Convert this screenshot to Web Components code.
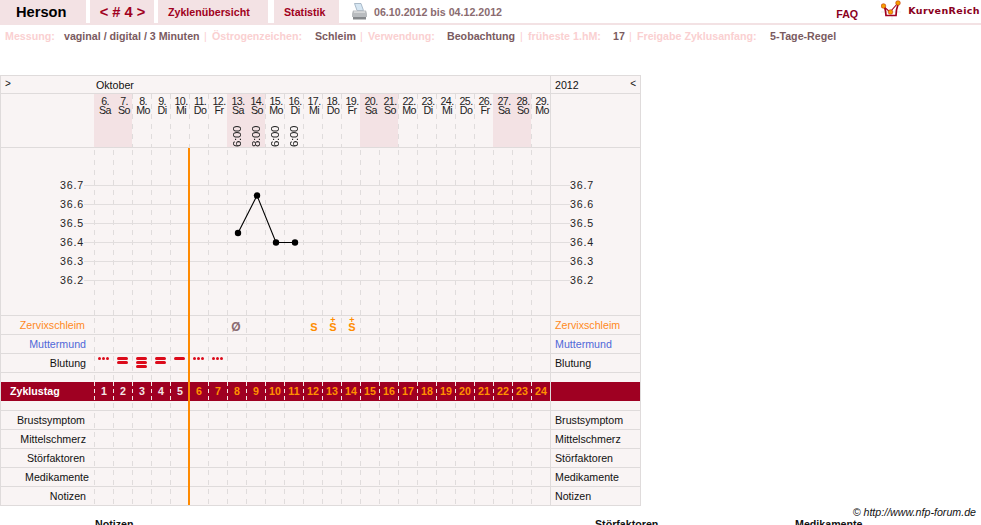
<!DOCTYPE html>
<html lang="de"><head><meta charset="utf-8"><title>Herson</title>
<style>
html,body{margin:0;padding:0;background:#fff;overflow:hidden;height:525px}
body{font:10.67px "Liberation Sans",Arial,sans-serif;color:#000}
</style></head><body>
<nfp-topbar></nfp-topbar>
<nfp-params></nfp-params>
<nfp-chart></nfp-chart>
<nfp-footer></nfp-footer>
<script>
const DASH='#e0dcdc',LINE='#dfdbdb',BG='#f9f4f4';
class Topbar extends HTMLElement{connectedCallback(){this.attachShadow({mode:'open'}).innerHTML=`<style>
:host{display:flex;height:23px;border-bottom:2px solid #f3e2e4;box-sizing:content-box;align-items:stretch;font:bold 10.67px "Liberation Sans",sans-serif}
.t{background:#f3e2e4;display:flex;align-items:center;color:#a00020;padding-top:1px;box-sizing:border-box}
.n{width:86px;padding-left:16px;font-size:14.67px;color:#000;margin-right:4px}
.c{width:64px;margin-right:4px;justify-content:center;font-size:14.67px;padding-left:1px}
.z{width:110px;padding-left:10px;margin-right:6px}
.s{width:65px;padding-left:10px;margin-right:13px}
.p{width:15px;margin-right:7px;align-self:center}
.d{color:#8a6b70;align-self:center;padding-top:1px}
.f{margin-left:auto;color:#8a0020;align-self:flex-end;margin-right:23px;margin-bottom:3px}
.l{width:20px;margin-right:7px}
.k{font:bold 9.5px "DejaVu Sans",sans-serif;color:#8a0020;margin-right:1px;padding-top:5px;letter-spacing:.4px}
</style>
<div class="t n">Herson</div><div class="t c">&lt; # 4 &gt;</div><div class="t z">Zyklenübersicht</div><div class="t s">Statistik</div>
<svg class="p" width="15" height="17" viewBox="0 0 15 17"><path d="M2.5 0.5h6.5l2.5 7H5z" fill="#d6e6f2" stroke="#8fa3b5" stroke-width=".7"/><path d="M1 7.5h13l1 3v3.5H0v-3.5z" fill="#b9bcbf"/><path d="M1 14h13v2.5H1z" fill="#85888b"/><path d="M2 8.5h11v1.2H2z" fill="#e2e4e4"/></svg>
<div class="d">06.10.2012 bis 04.12.2012</div>
<div class="f">FAQ</div>
<svg class="l" width="20" height="20" viewBox="0 0 20 20" style="align-self:flex-start"><path d="M0 12h20M11 14v6" stroke="#e4e4e4" stroke-width=".7"/><path d="M3.500 7c1 3 1.500 5 1.500 8.500h10c0-3 .5-7 2-11" fill="none" stroke="#a00020" stroke-width="1.700"/><path d="M2 6l7 6 8-9" fill="none" stroke="#a00020" stroke-width="1.100"/><circle cx="2.500" cy="6" r="2.300" fill="#f5a000" stroke="#c33000" stroke-width=".6"/><circle cx="9.500" cy="12" r="2.300" fill="#f5a000" stroke="#c33000" stroke-width=".6"/><circle cx="17" cy="3" r="2.300" fill="#f5a000" stroke="#c33000" stroke-width=".6"/></svg>
<div class="k">KurvenReich</div>`}}
customElements.define('nfp-topbar',Topbar);

class Params extends HTMLElement{connectedCallback(){
const items=[['Messung:','vaginal / digital / 3 Minuten',5,59],['Östrogenzeichen:','Schleim',212,103],['Verwendung:','Beobachtung',368,79],['früheste 1.hM:','17',528,85],['Freigabe Zyklusanfang:','5-Tage-Regel',637,133]];
this.attachShadow({mode:'open'}).innerHTML=`<style>
:host{display:flex;height:22px;align-items:center;padding-left:5px;font:bold 10.67px "Liberation Sans",sans-serif;color:#7a5a60;white-space:nowrap}
.l{color:#fad0d1;display:inline-block}
.v{display:inline-block}
.b{color:#fad0d1;font-weight:normal;display:inline-block}
</style>`+items.map((it,i)=>{
 const next=i<4?items[i+1][2]:0;
 return `<span class="l" style="width:${it[3]}px">${it[0]}</span><span class="v" style="width:${i<4?next-it[2]-it[3]-8:100}px">${it[1]}</span>${i<4?'<span class="b" style="width:8px">|</span>':''}`;
}).join('')}}
customElements.define('nfp-params',Params);

class Row extends HTMLElement{connectedCallback(){
const a=n=>this.getAttribute(n)||'';
this.attachShadow({mode:'open'}).innerHTML=`<style>
:host{display:grid;grid-template-columns:93px 456px 90px;height:${a('h')||19}px;box-sizing:border-box;border-bottom:${a('nob')?'0':'1px solid '+LINE};color:${a('color')||'#111'};font-size:10.67px;line-height:16px}
.a{text-align:right;padding:1px 8px 0 0;box-sizing:border-box;white-space:nowrap}
.m{position:relative;display:grid;grid-template-columns:repeat(24,19px);grid-template-rows:minmax(0,1fr)}
.m::before{content:"";position:absolute;inset:0 0 -1px 0;pointer-events:none;background:linear-gradient(to right,${DASH} 1px,transparent 1px) 0 0/19px 100%;-webkit-mask:linear-gradient(#000 5px,transparent 5px) 0 ${a('ph')||0}px/100% 10px;mask:linear-gradient(#000 5px,transparent 5px) 0 ${a('ph')||0}px/100% 10px}
.r{border-left:1px solid ${LINE};padding:1px 0 0 4px;white-space:nowrap;box-sizing:border-box}
</style><div class="a" style="padding-right:${a('pr')||8}px"><slot name="l">${a('label')}</slot></div><div class="m"><slot></slot></div><div class="r"><slot name="r">${a('right')||a('label')}</slot></div>`}}
customElements.define('nfp-row',Row);

class Day extends HTMLElement{connectedCallback(){
const w=this.hasAttribute('we');
this.style.gridColumn=this.getAttribute('col');
const d=this.getAttribute('d'),wd=this.getAttribute('wd'),t=this.getAttribute('t');
let inner='<slot></slot>';
if(d)inner=`<div class="d">${d}.<br>${wd}</div>`+(t?`<div class="t">${t}</div>`:'');
this.attachShadow({mode:'open'}).innerHTML=`<style>
:host{display:block;position:relative;height:100%;${w?'background:#f3e2e4;':''}text-align:center;padding-left:3px;box-sizing:border-box}
.d{font-size:10.67px;line-height:9px;letter-spacing:-.6px;color:#222;padding-top:3px}
.t{position:absolute;left:1px;right:0;bottom:0;height:24px;writing-mode:vertical-rl;transform:rotate(180deg);font-size:11.5px;line-height:19px;letter-spacing:-.3px;color:#222;display:flex;align-items:center;justify-content:flex-start}
</style>${inner}`}}
customElements.define('nfp-day',Day);

class Bleed extends HTMLElement{connectedCallback(){
const k=this.getAttribute('k');
const b=k==='dots'?'<i class="o"></i><i class="o"></i><i class="o"></i>':'<i class="b"></i>'.repeat(+k);
this.attachShadow({mode:'open'}).innerHTML=`<style>
:host{display:flex;height:100%;padding:3px 0 0 4px;box-sizing:border-box;flex-direction:${k==='dots'?'row':'column'};gap:1px}
i{display:block;background:#dc0a1a}
.o{width:3px;height:3px;border-radius:50%}
.b{width:11px;height:3px;border-radius:2px}
</style>${b}`}}
customElements.define('nfp-bleed',Bleed);

class Graph extends HTMLElement{connectedCallback(){
const ys=[[36.7,38],[36.6,57],[36.5,76],[36.4,95],[36.3,114],[36.2,133]];
let g='';
ys.forEach(([v,y])=>{g+=`<line x1="84" x2="570" y1="${y-.5}" y2="${y-.5}" stroke="#e2dede"/>`;
 g+=`<text x="60" y="${y+3}">${v}</text><text x="570" y="${y+3}">${v}</text>`});
const pts=[[238,85],[257,47.5],[276,94.5],[295,94.5]];
g+=`<polyline points="${pts.map(p=>p.join(',')).join(' ')}" fill="none" stroke="#000" stroke-width="1.1"/>`;
pts.forEach(p=>g+=`<circle cx="${p[0]}" cy="${p[1]}" r="3.2" fill="#000"/>`);
this.attachShadow({mode:'open'}).innerHTML=`<style>
:host{display:block;position:relative;height:168px;box-sizing:border-box;border-bottom:1px solid ${LINE}}
svg{position:absolute;inset:0;display:block}
text{font:10.67px "Liberation Sans",sans-serif;letter-spacing:.8px;fill:#222}
.m{position:absolute;left:93px;top:0;bottom:-1px;width:456px;background:linear-gradient(to right,${DASH} 1px,transparent 1px) 0 0/19px 100%;-webkit-mask:linear-gradient(#000 5px,transparent 5px) 0 2px/100% 10px;mask:linear-gradient(#000 5px,transparent 5px) 0 2px/100% 10px}
.r{position:absolute;left:549px;top:0;bottom:-1px;width:1px;background:${LINE}}
</style><div class="m"></div><div class="r"></div><svg width="639" height="167" viewBox="0 0 639 167"><g transform="translate(-1,0)">${g}</g></svg>`}}
customElements.define('nfp-graph',Graph);

class Chart extends HTMLElement{connectedCallback(){
const wd=['Sa','So','Mo','Di','Mi','Do','Fr'];
const times={13:'6:00',14:'8:00',15:'6:00',16:'6:00'};
let head='',cyc='';
for(let i=0;i<24;i++){const d=6+i,w=wd[i%7];
 head+=`<nfp-day col="${i+1}" d="${d}" wd="${w}" ${w==='Sa'||w==='So'?'we':''} ${times[d]?`t="${times[d]}"`:''}></nfp-day>`;
 cyc+=`<span class="cy" style="grid-column:${i+1};color:${i<5?'#f3e6e6':'#ff9000'}">${i+1}</span>`;}
const bleed=['dots',2,3,2,1,'dots','dots'].map((k,i)=>`<nfp-bleed style="grid-column:${i+1}" k="${k}"></nfp-bleed>`).join('');
this.attachShadow({mode:'open'}).innerHTML=`<style>
:host{display:block;position:relative;width:641px;box-sizing:border-box;margin-top:28px;border:1px solid ${LINE};background:${BG};font:10.67px "Liberation Sans",sans-serif;color:#111}
.month{display:grid;grid-template-columns:93px 456px 90px;height:18px;border-bottom:1px solid ${LINE};box-sizing:border-box;line-height:18px}
.month>div{white-space:nowrap}
.month .a{padding-left:4px;font-size:10px;line-height:15px}
.month .o{padding-left:2px}
.month .r{border-left:1px solid ${LINE};padding-left:4px;display:flex;justify-content:space-between;padding-right:4px;box-sizing:border-box}
.month .r b{font-weight:normal;font-size:10px;line-height:15px}
.spin{background:#9f0022;height:19px;display:grid;grid-template-columns:93px 456px 1fr;color:#fff;font:bold 10.67px "Liberation Sans",sans-serif;line-height:19px}
.spin .lab{padding-left:9px}
.spin .mid{position:relative;display:grid;grid-template-columns:repeat(24,19px)}
.spin .mid::before{content:"";position:absolute;inset:0;background:linear-gradient(to right,#f3e6e6 1px,transparent 1px) 0 0/19px 100%;-webkit-mask:linear-gradient(#000 4px,transparent 4px) 0 0/100% 7px;mask:linear-gradient(#000 4px,transparent 4px) 0 0/100% 7px}
.spin .side{border-left:1px solid ${LINE}}
.cy{text-align:center;padding-left:1px}
.orange{position:absolute;left:187px;top:72px;bottom:0;width:2px;background:#ff8a00}
.sym{font:bold 11px "Liberation Sans",sans-serif;text-align:center;padding:3px 0 0 3px;line-height:17px;color:#ff8c00;position:relative;display:block}
.sym sup{position:absolute;left:0;right:0;top:0;font:bold 9px/8px "Liberation Sans",sans-serif;text-align:center;padding-left:3px}
.zero{color:#8a6b70;font-size:12px;padding:3px 1px 0 0}
</style>
<div class="month"><div class="a">&gt;</div><div class="o">Oktober</div><div class="r"><span>2012</span><b>&lt;</b></div></div>
<nfp-row h="54" label="" right=" ">${head}</nfp-row>
<nfp-graph></nfp-graph>
<nfp-row label="Zervixschleim" color="#ff8a1e" ph="2" pr="9">
 <span class="sym zero" style="grid-column:8">&#216;</span>
 <span class="sym" style="grid-column:12">S</span>
 <span class="sym" style="grid-column:13"><sup>+</sup>S</span>
 <span class="sym" style="grid-column:14"><sup>+</sup>S</span>
</nfp-row>
<nfp-row label="Muttermund" color="#5068d8" ph="2"></nfp-row>
<nfp-row label="Blutung" ph="2">${bleed}</nfp-row>
<nfp-row h="9" label="" right=" " nob="1" ph="2"></nfp-row>
<div class="spin"><div class="lab">Zyklustag</div><div class="mid">${cyc}</div><div class="side"></div></div>
<nfp-row h="10" label="" right=" " ph="2"></nfp-row>
<nfp-row label="Brustsymptom" pr="9" ph="2"></nfp-row>
<nfp-row label="Mittelschmerz" ph="2"></nfp-row>
<nfp-row label="Störfaktoren" pr="9" ph="2"></nfp-row>
<nfp-row label="Medikamente" pr="5" ph="2"></nfp-row>
<nfp-row label="Notizen" h="18" nob="1" ph="2"></nfp-row>
<div class="orange"></div>`}}
customElements.define('nfp-chart',Chart);

class Footer extends HTMLElement{connectedCallback(){this.attachShadow({mode:'open'}).innerHTML=`<style>
:host{display:block;width:976px;font:10.67px "Liberation Sans",sans-serif;color:#111}
.c{text-align:right;font-style:italic;line-height:13px}
.g{display:grid;grid-template-columns:95px 500px 200px 1fr;font-weight:bold;line-height:13px;margin-top:-1px}
</style><div class="c">© http://www.nfp-forum.de</div><div class="g"><span></span><span>Notizen</span><span>Störfaktoren</span><span>Medikamente</span></div>`}}
customElements.define('nfp-footer',Footer);
</script></body></html>
